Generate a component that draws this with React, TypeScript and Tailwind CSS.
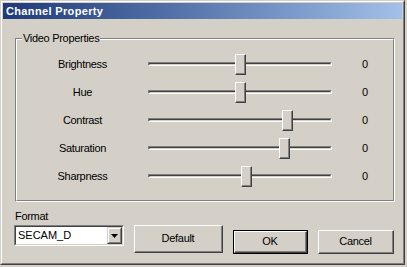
const rows = [
  { label: "Brightness", pos: 87 },
  { label: "Hue", pos: 87 },
  { label: "Contrast", pos: 134 },
  { label: "Saturation", pos: 131 },
  { label: "Sharpness", pos: 93 },
];

function Slider({ pos }: { pos: number }) {
  return (
    <div className="relative w-[184px] h-[21px] flex items-center">
      {/* sunken channel */}
      <div className="w-full h-[4px] border-t border-l border-t-[#808080] border-l-[#808080] border-b border-r border-b-white border-r-white">
        <div className="h-full border-t border-l border-t-[#404040] border-l-[#404040] border-b border-r border-b-[#d4d0c8] border-r-[#d4d0c8]" />
      </div>
      {/* thumb */}
      <div
        className="absolute top-0 w-[11px] h-[21px] border-t border-l border-t-white border-l-white border-b border-r border-b-[#404040] border-r-[#404040]"
        style={{ left: pos }}
      >
        <div className="w-full h-full bg-[#d4d0c8] border-b border-r border-b-[#808080] border-r-[#808080]" />
      </div>
    </div>
  );
}

function Button({ children, isDefault, className }: { children: React.ReactNode; isDefault?: boolean; className: string }) {
  const inner = (
    <div className="w-full h-full border-t border-l border-t-white border-l-white border-b border-r border-b-[#404040] border-r-[#404040]">
      <div className="w-full h-full flex items-center justify-center border-b border-r border-b-[#808080] border-r-[#808080]">
        {children}
      </div>
    </div>
  );
  if (isDefault) {
    return <div className={`border border-black ${className}`}>{inner}</div>;
  }
  return <div className={className}>{inner}</div>;
}

export default function App() {
  return (
    <div
      className="w-[407px] h-[267px] bg-[#d4d0c8] text-[11px] tracking-[-0.3px] text-black leading-[13px]"
      style={{ fontFamily: '"Liberation Sans", Arial, sans-serif' }}
    >
      <div className="w-[405px] h-[265px] border-t border-l border-t-[#d4d0c8] border-l-[#d4d0c8] border-b border-r border-b-[#404040] border-r-[#404040]">
        <div className="w-full h-full border-t border-l border-t-white border-l-white border-b border-r border-b-[#808080] border-r-[#808080]">
          {/* title bar */}
          <div className="mx-[1px] mt-[1px] h-[16px] flex items-center pl-[3px] bg-gradient-to-r from-[#1f3a7a] to-[#a2c0e8]">
            <span className="text-white font-bold text-[11px] tracking-[0.35px]">Channel Property</span>
          </div>

          {/* group box */}
          <div className="relative ml-[13px] mt-[19px] w-[380px] h-[164px] border-t border-l border-t-[#808080] border-l-[#808080] border-b border-r border-b-white border-r-white">
            <div className="w-full h-full border-t border-l border-t-white border-l-white border-b border-r border-b-[#808080] border-r-[#808080] pt-[10px]">
              {rows.map((r) => (
                <div key={r.label} className="h-[28px] flex items-center">
                  <div className="w-[131px] text-center">{r.label}</div>
                  <Slider pos={r.pos} />
                  <div className="pl-[30px]">0</div>
                </div>
              ))}
            </div>
            <div className="absolute left-[6px] top-[-7px] px-[1px] bg-[#d4d0c8]">Video Properties</div>
          </div>

          {/* bottom row */}
          <div className="flex items-start mt-[8px] ml-[12px]">
            <div className="flex flex-col">
              <div className="pl-[1px] h-[13px]">Format</div>
              <div className="mt-[2px] w-[110px] h-[21px] border-t border-l border-t-[#808080] border-l-[#808080] border-b border-r border-b-white border-r-white">
                <div className="w-full h-full bg-white flex items-center border-t border-l border-t-[#404040] border-l-[#404040] border-b border-r border-b-[#d4d0c8] border-r-[#d4d0c8]">
                  <span className="pl-[2px] flex-1 tracking-[0px]">SECAM_D</span>
                  <div className="w-[15px] h-[17px] border-t border-l border-t-[#d4d0c8] border-l-[#d4d0c8] border-b border-r border-b-[#404040] border-r-[#404040]">
                    <div className="w-full h-full bg-[#d4d0c8] flex items-center justify-center border-t border-l border-t-white border-l-white border-b border-r border-b-[#808080] border-r-[#808080]">
                      <svg width="7" height="4" viewBox="0 0 7 4">
                        <path d="M0 0H7L3.5 4Z" fill="#000" />
                      </svg>
                    </div>
                  </div>
                </div>
              </div>
            </div>
            <Button className="ml-[10px] mt-[15px] w-[89px] h-[28px]">Default</Button>
            <Button isDefault className="ml-[10px] mt-[20px] w-[75px] h-[24px]">OK</Button>
            <Button className="ml-[10px] mt-[20px] w-[76px] h-[24px]">Cancel</Button>
          </div>
        </div>
      </div>
    </div>
  );
}
